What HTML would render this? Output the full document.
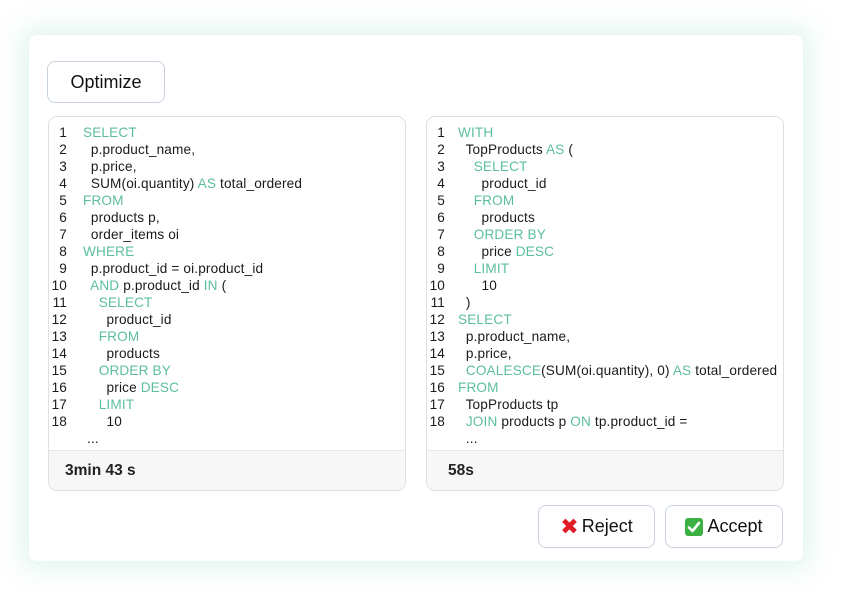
<!DOCTYPE html>
<html><head><meta charset="utf-8"><style>
*{box-sizing:border-box;margin:0;padding:0}
body{width:841px;height:600px;background:#fff;font-family:"Liberation Sans","DejaVu Sans",sans-serif;position:relative;overflow:hidden}
.card{position:absolute;left:29px;top:35px;width:774px;height:526px;background:#fff;border-radius:8px;box-shadow:0 0 24px 8px rgba(170,225,210,0.35)}
.btn{position:absolute;border:1px solid #c9d3e0;border-radius:8px;background:#fff;font-size:18px;color:#111;display:flex;align-items:center;justify-content:center}
.panel{position:absolute;top:116px;width:358px;height:375px;border:1px solid #dde0e6;border-radius:9px;overflow:hidden;background:#fff}
.code{position:absolute;top:7px;left:0;right:0;font-size:13.6px;letter-spacing:0.15px;line-height:17px;color:#1a1a1a}
.l{white-space:pre;height:17px;position:relative}
.n{position:absolute;left:0;width:18px;text-align:right}
.c{position:absolute;left:34px}
.k{color:#5cbf9c}
.foot{position:absolute;left:0;right:0;bottom:0;height:40px;background:#f7f7f7;border-top:1px solid #e6e6e6;font-size:15.5px;font-weight:bold;padding:11px 0 0 16px;color:#222}
.x{color:#e01b24;font-weight:bold;font-size:22px;margin-right:3px}
</style></head><body>
<div class="card"></div>
<div class="btn" style="left:47px;top:61px;width:118px;height:42px">Optimize</div>

<div class="panel" style="left:48px">
<div class="code">
<div class="l"><span class="n">1</span><span class="c"><span class="k">SELECT</span></span></div>
<div class="l"><span class="n">2</span><span class="c">  p.product_name,</span></div>
<div class="l"><span class="n">3</span><span class="c">  p.price,</span></div>
<div class="l"><span class="n">4</span><span class="c">  SUM(oi.quantity) <span class="k">AS</span> total_ordered</span></div>
<div class="l"><span class="n">5</span><span class="c"><span class="k">FROM</span></span></div>
<div class="l"><span class="n">6</span><span class="c">  products p,</span></div>
<div class="l"><span class="n">7</span><span class="c">  order_items oi</span></div>
<div class="l"><span class="n">8</span><span class="c"><span class="k">WHERE</span></span></div>
<div class="l"><span class="n">9</span><span class="c">  p.product_id = oi.product_id</span></div>
<div class="l"><span class="n">10</span><span class="c">  <span class="k">AND</span> p.product_id <span class="k">IN</span> (</span></div>
<div class="l"><span class="n">11</span><span class="c">    <span class="k">SELECT</span></span></div>
<div class="l"><span class="n">12</span><span class="c">      product_id</span></div>
<div class="l"><span class="n">13</span><span class="c">    <span class="k">FROM</span></span></div>
<div class="l"><span class="n">14</span><span class="c">      products</span></div>
<div class="l"><span class="n">15</span><span class="c">    <span class="k">ORDER BY</span></span></div>
<div class="l"><span class="n">16</span><span class="c">      price <span class="k">DESC</span></span></div>
<div class="l"><span class="n">17</span><span class="c">    <span class="k">LIMIT</span></span></div>
<div class="l"><span class="n">18</span><span class="c">      10</span></div>
<div class="l"><span class="c" style="left:38px">...</span></div>
</div>
<div class="foot">3min 43 s</div>
</div>

<div class="panel" style="left:426px">
<div class="code">
<div class="l"><span class="n">1</span><span class="c" style="left:31px"><span class="k">WITH</span></span></div>
<div class="l"><span class="n">2</span><span class="c" style="left:31px">  TopProducts <span class="k">AS</span> (</span></div>
<div class="l"><span class="n">3</span><span class="c" style="left:31px">    <span class="k">SELECT</span></span></div>
<div class="l"><span class="n">4</span><span class="c" style="left:31px">      product_id</span></div>
<div class="l"><span class="n">5</span><span class="c" style="left:31px">    <span class="k">FROM</span></span></div>
<div class="l"><span class="n">6</span><span class="c" style="left:31px">      products</span></div>
<div class="l"><span class="n">7</span><span class="c" style="left:31px">    <span class="k">ORDER BY</span></span></div>
<div class="l"><span class="n">8</span><span class="c" style="left:31px">      price <span class="k">DESC</span></span></div>
<div class="l"><span class="n">9</span><span class="c" style="left:31px">    <span class="k">LIMIT</span></span></div>
<div class="l"><span class="n">10</span><span class="c" style="left:31px">      10</span></div>
<div class="l"><span class="n">11</span><span class="c" style="left:31px">  )</span></div>
<div class="l"><span class="n">12</span><span class="c" style="left:31px"><span class="k">SELECT</span></span></div>
<div class="l"><span class="n">13</span><span class="c" style="left:31px">  p.product_name,</span></div>
<div class="l"><span class="n">14</span><span class="c" style="left:31px">  p.price,</span></div>
<div class="l"><span class="n">15</span><span class="c" style="left:31px">  <span class="k">COALESCE</span>(SUM(oi.quantity), 0) <span class="k">AS</span> total_ordered</span></div>
<div class="l"><span class="n">16</span><span class="c" style="left:31px"><span class="k">FROM</span></span></div>
<div class="l"><span class="n">17</span><span class="c" style="left:31px">  TopProducts tp</span></div>
<div class="l"><span class="n">18</span><span class="c" style="left:31px">  <span class="k">JOIN</span> products p <span class="k">ON</span> tp.product_id =</span></div>
<div class="l"><span class="c" style="left:31px">  ...</span></div>
</div>
<div class="foot" style="padding-left:21px">58s</div>
</div>

<div class="btn" style="left:538px;top:505px;width:117px;height:43px"><span class="x">✖</span>Reject</div>
<div class="btn" style="left:665px;top:505px;width:118px;height:43px"><svg width="18" height="18" viewBox="0 0 18 18" style="margin-right:4px"><rect x="0" y="0" width="18" height="18" rx="3" fill="#3cb043"/><path d="M4 9.5 L7.5 13 L14 5" stroke="#fff" stroke-width="2.6" fill="none" stroke-linecap="round" stroke-linejoin="round"/></svg>Accept</div>
</body></html>
